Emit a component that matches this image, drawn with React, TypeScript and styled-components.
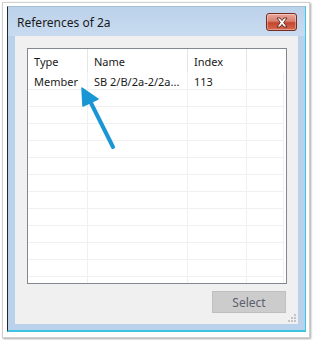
import React from "react";
import styled, { createGlobalStyle } from "styled-components";

const GlobalStyle = createGlobalStyle`
  html, body { margin: 0; padding: 0; background: #ffffff; }
  body { font-family: "Noto Sans", "Open Sans", "Liberation Sans", sans-serif; }
  * { box-sizing: border-box; }
`;

const Page = styled.div`
  width: 313px;
  height: 340px;
  padding: 2px 3px 2px 2px;
  position: relative;
`;

const Frame = styled.div`
  width: 308px;
  height: 336px;
  border: 1px solid #cfcfcf;
  box-shadow: 1px 1px 2px rgba(0, 0, 0, 0.35);
  background: #ffffff;
  padding: 3px 3px 5px 4px;
  display: flex;
`;

const Window = styled.div`
  flex: 1;
  display: flex;
  flex-direction: column;
  background: #b9d1ea;
  border-left: 1px solid #1f2a2e;
  border-top: 1px solid #a6bdd6;
  border-right: 1px solid #3ec3e3;
  border-bottom: 2px solid #3ec3e3;
`;

const TitleBar = styled.div`
  height: 29px;
  display: flex;
  align-items: center;
  justify-content: space-between;
  padding: 0 8px 0 9px;
  background: linear-gradient(#bcd2ea, #c8dbf0);
`;

const Title = styled.span`
  font-size: 12px;
  color: #1a1a1a;
  padding-top: 2px;
`;

const CloseButton = styled.div`
  width: 31px;
  height: 18px;
  margin-top: 1px;
  border: 1px solid #7a2a22;
  border-radius: 3px;
  background: linear-gradient(#e8a79b 0%, #d8806f 45%, #c3452f 55%, #d46a4e 100%);
  box-shadow: inset 0 0 0 1px rgba(255, 255, 255, 0.35);
  display: flex;
  align-items: center;
  justify-content: center;
`;

const Client = styled.div`
  flex: 1;
  margin: 0 7px 6px 7px;
  background: #f0f0f0;
  display: flex;
  flex-direction: column;
  padding: 12px 11px 0 12px;
  position: relative;
`;

const ListView = styled.div`
  height: 236px;
  border: 1px solid #828790;
  background: #ffffff;
  overflow: hidden;
`;

const Row = styled.div<{ $header?: boolean }>`
  display: grid;
  grid-template-columns: 60px 100px 59px 37px;
  height: ${(p) => (p.$header ? "24px" : "17px")};
`;

const Cell = styled.div<{ $header?: boolean; $last?: boolean }>`
  font-size: 11px;
  color: #1a1a1a;
  line-height: ${(p) => (p.$header ? "22px" : "16px")};
  padding-top: ${(p) => (p.$header ? "2px" : "1px")};
  padding-left: 6px;
  white-space: nowrap;
  overflow: hidden;
  border-right: 1px solid ${(p) => (p.$header ? (p.$last ? "transparent" : "#e5e5e5") : "#f0f0f0")};
  border-bottom: 1px solid ${(p) => (p.$header ? "transparent" : "#f0f0f0")};
`;

const Footer = styled.div`
  display: flex;
  justify-content: flex-end;
  padding-top: 7px;
  padding-right: 1px;
`;

const Button = styled.button`
  width: 74px;
  height: 22px;
  border: 1px solid #bfbfbf;
  background: #cccccc;
  color: #5c5f6e;
  font-family: inherit;
  font-size: 12px;
  padding: 0;
`;

const Grip = styled.svg`
  position: absolute;
  right: 1px;
  bottom: 1px;
`;

const Arrow = styled.svg`
  position: absolute;
  left: 0;
  top: 0;
  pointer-events: none;
`;

const columns = ["Type", "Name", "Index", ""];
const data = [["Member", "SB 2/B/2a-2/2a...", "113", ""]];

export default function App() {
  const emptyRows = 12;
  return (
    <>
      <GlobalStyle />
      <Page>
        <Frame>
          <Window>
            <TitleBar>
              <Title>References of 2a</Title>
              <CloseButton>
                <svg width="14" height="11" viewBox="0 0 14 11">
                  <path
                    d="M2 1 L5 1 L7 3.5 L9 1 L12 1 L8.7 5.5 L12 10 L9 10 L7 7.5 L5 10 L2 10 L5.3 5.5 Z"
                    fill="#ffffff"
                    stroke="#5a231c"
                    strokeWidth="0.9"
                    strokeLinejoin="round"
                  />
                </svg>
              </CloseButton>
            </TitleBar>
            <Client>
              <ListView>
                <Row $header>
                  {columns.map((c, i) => (
                    <Cell key={i} $header $last={i === columns.length - 1}>
                      {c}
                    </Cell>
                  ))}
                </Row>
                {data.map((r, ri) => (
                  <Row key={ri}>
                    {r.map((c, i) => (
                      <Cell key={i}>{c}</Cell>
                    ))}
                  </Row>
                ))}
                {Array.from({ length: emptyRows }).map((_, ri) => (
                  <Row key={"e" + ri}>
                    {columns.map((_, i) => (
                      <Cell key={i} />
                    ))}
                  </Row>
                ))}
              </ListView>
              <Footer>
                <Button disabled>Select</Button>
              </Footer>
              <Grip width="10" height="10" viewBox="0 0 10 10">
                {[
                  [8, 2],
                  [8, 5],
                  [5, 5],
                  [8, 8],
                  [5, 8],
                  [2, 8],
                ].map(([x, y], i) => (
                  <rect key={i} x={x - 1} y={y - 1} width="2" height="2" fill="#c4c4c4" />
                ))}
              </Grip>
            </Client>
          </Window>
        </Frame>
        <Arrow width="313" height="340" viewBox="0 0 313 340">
          <line x1="113" y1="147" x2="89" y2="99" stroke="#1b96d4" strokeWidth="4" strokeLinecap="round" />
          <polygon points="82,88 83,106 98,99" fill="#1b96d4" stroke="#1b96d4" strokeWidth="1.5" strokeLinejoin="round" />
        </Arrow>
      </Page>
    </>
  );
}
